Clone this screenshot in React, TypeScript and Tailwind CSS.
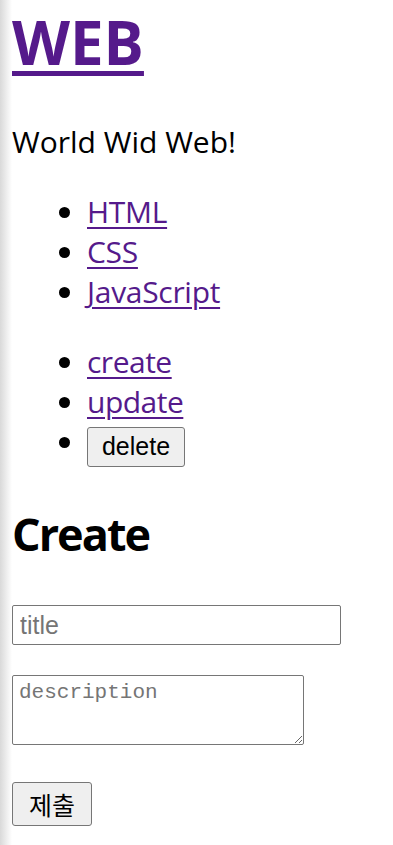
import React from 'react';

const topics = [
  { id: 1, title: 'HTML' },
  { id: 2, title: 'CSS' },
  { id: 3, title: 'JavaScript' },
];

const sans = "font-['Open_Sans','Noto_Sans_CJK_KR',sans-serif]";
const link = 'text-[#551a8b] underline decoration-[2px] underline-offset-[4px]';

export default function App() {
  return (
    <div className={`relative min-h-[845px] bg-white text-black ${sans}`}>
      {/* browser edge shadow */}
      <div className="pointer-events-none absolute left-0 top-0 h-full w-[12px] bg-gradient-to-r from-[#d9d9d9] to-white/0" />

      <div className="pl-[12px] pt-[2px]">
        <h1 className="text-[60px] font-bold leading-[80px]">
          <a href="#" className="text-[#551a8b] underline decoration-[5px] underline-offset-[6px]">
            WEB
          </a>
        </h1>

        <p className="mt-[40px] text-[30px] leading-[40px]">World Wid Web!</p>

        <ul className="mt-[30px] list-disc pl-[75px] text-[30px] leading-[40px] tracking-[-0.3px]">
          {topics.map((t) => (
            <li key={t.id}>
              <a href="#" className={link}>
                {t.title}
              </a>
            </li>
          ))}
        </ul>

        <ul className="mt-[30px] list-disc pl-[75px] text-[30px] leading-[40px] tracking-[-0.5px]">
          <li>
            <a href="#" className={link}>
              create
            </a>
          </li>
          <li>
            <a href="#" className={link}>
              update
            </a>
          </li>
          <li className="h-[45px]">
            <button className="h-[40px] w-[98px] rounded-[3px] border border-[#767676] bg-[#efefef] font-['Liberation_Sans',sans-serif] text-[25px] leading-none tracking-normal align-[-2px]">
              delete
            </button>
          </li>
        </ul>

        <h2 className="mt-[37px] text-[45px] font-bold leading-[60px] tracking-[-2px]">Create</h2>

        <form className="mt-[41px] flex flex-col items-start">
          <input
            type="text"
            name="title"
            placeholder="title"
            className="h-[40px] w-[329px] rounded-[2px] border border-[#767676] px-[7px] font-['Liberation_Sans',sans-serif] text-[25px] outline-none placeholder:text-[#757575]"
          />
          <textarea
            name="body"
            placeholder="description"
            className="mt-[30px] h-[70px] w-[292px] rounded-[2px] border border-[#767676] px-[6px] py-[4px] font-['Liberation_Mono',monospace] text-[21px] leading-[26px] outline-none placeholder:text-[#757575]"
          />
          <button
            type="submit"
            className="mt-[37px] h-[44px] w-[80px] rounded-[3px] border border-[#767676] bg-[#efefef] font-['Noto_Sans_CJK_KR',sans-serif] text-[25px] leading-none"
          >
            제출
          </button>
        </form>
      </div>
    </div>
  );
}
